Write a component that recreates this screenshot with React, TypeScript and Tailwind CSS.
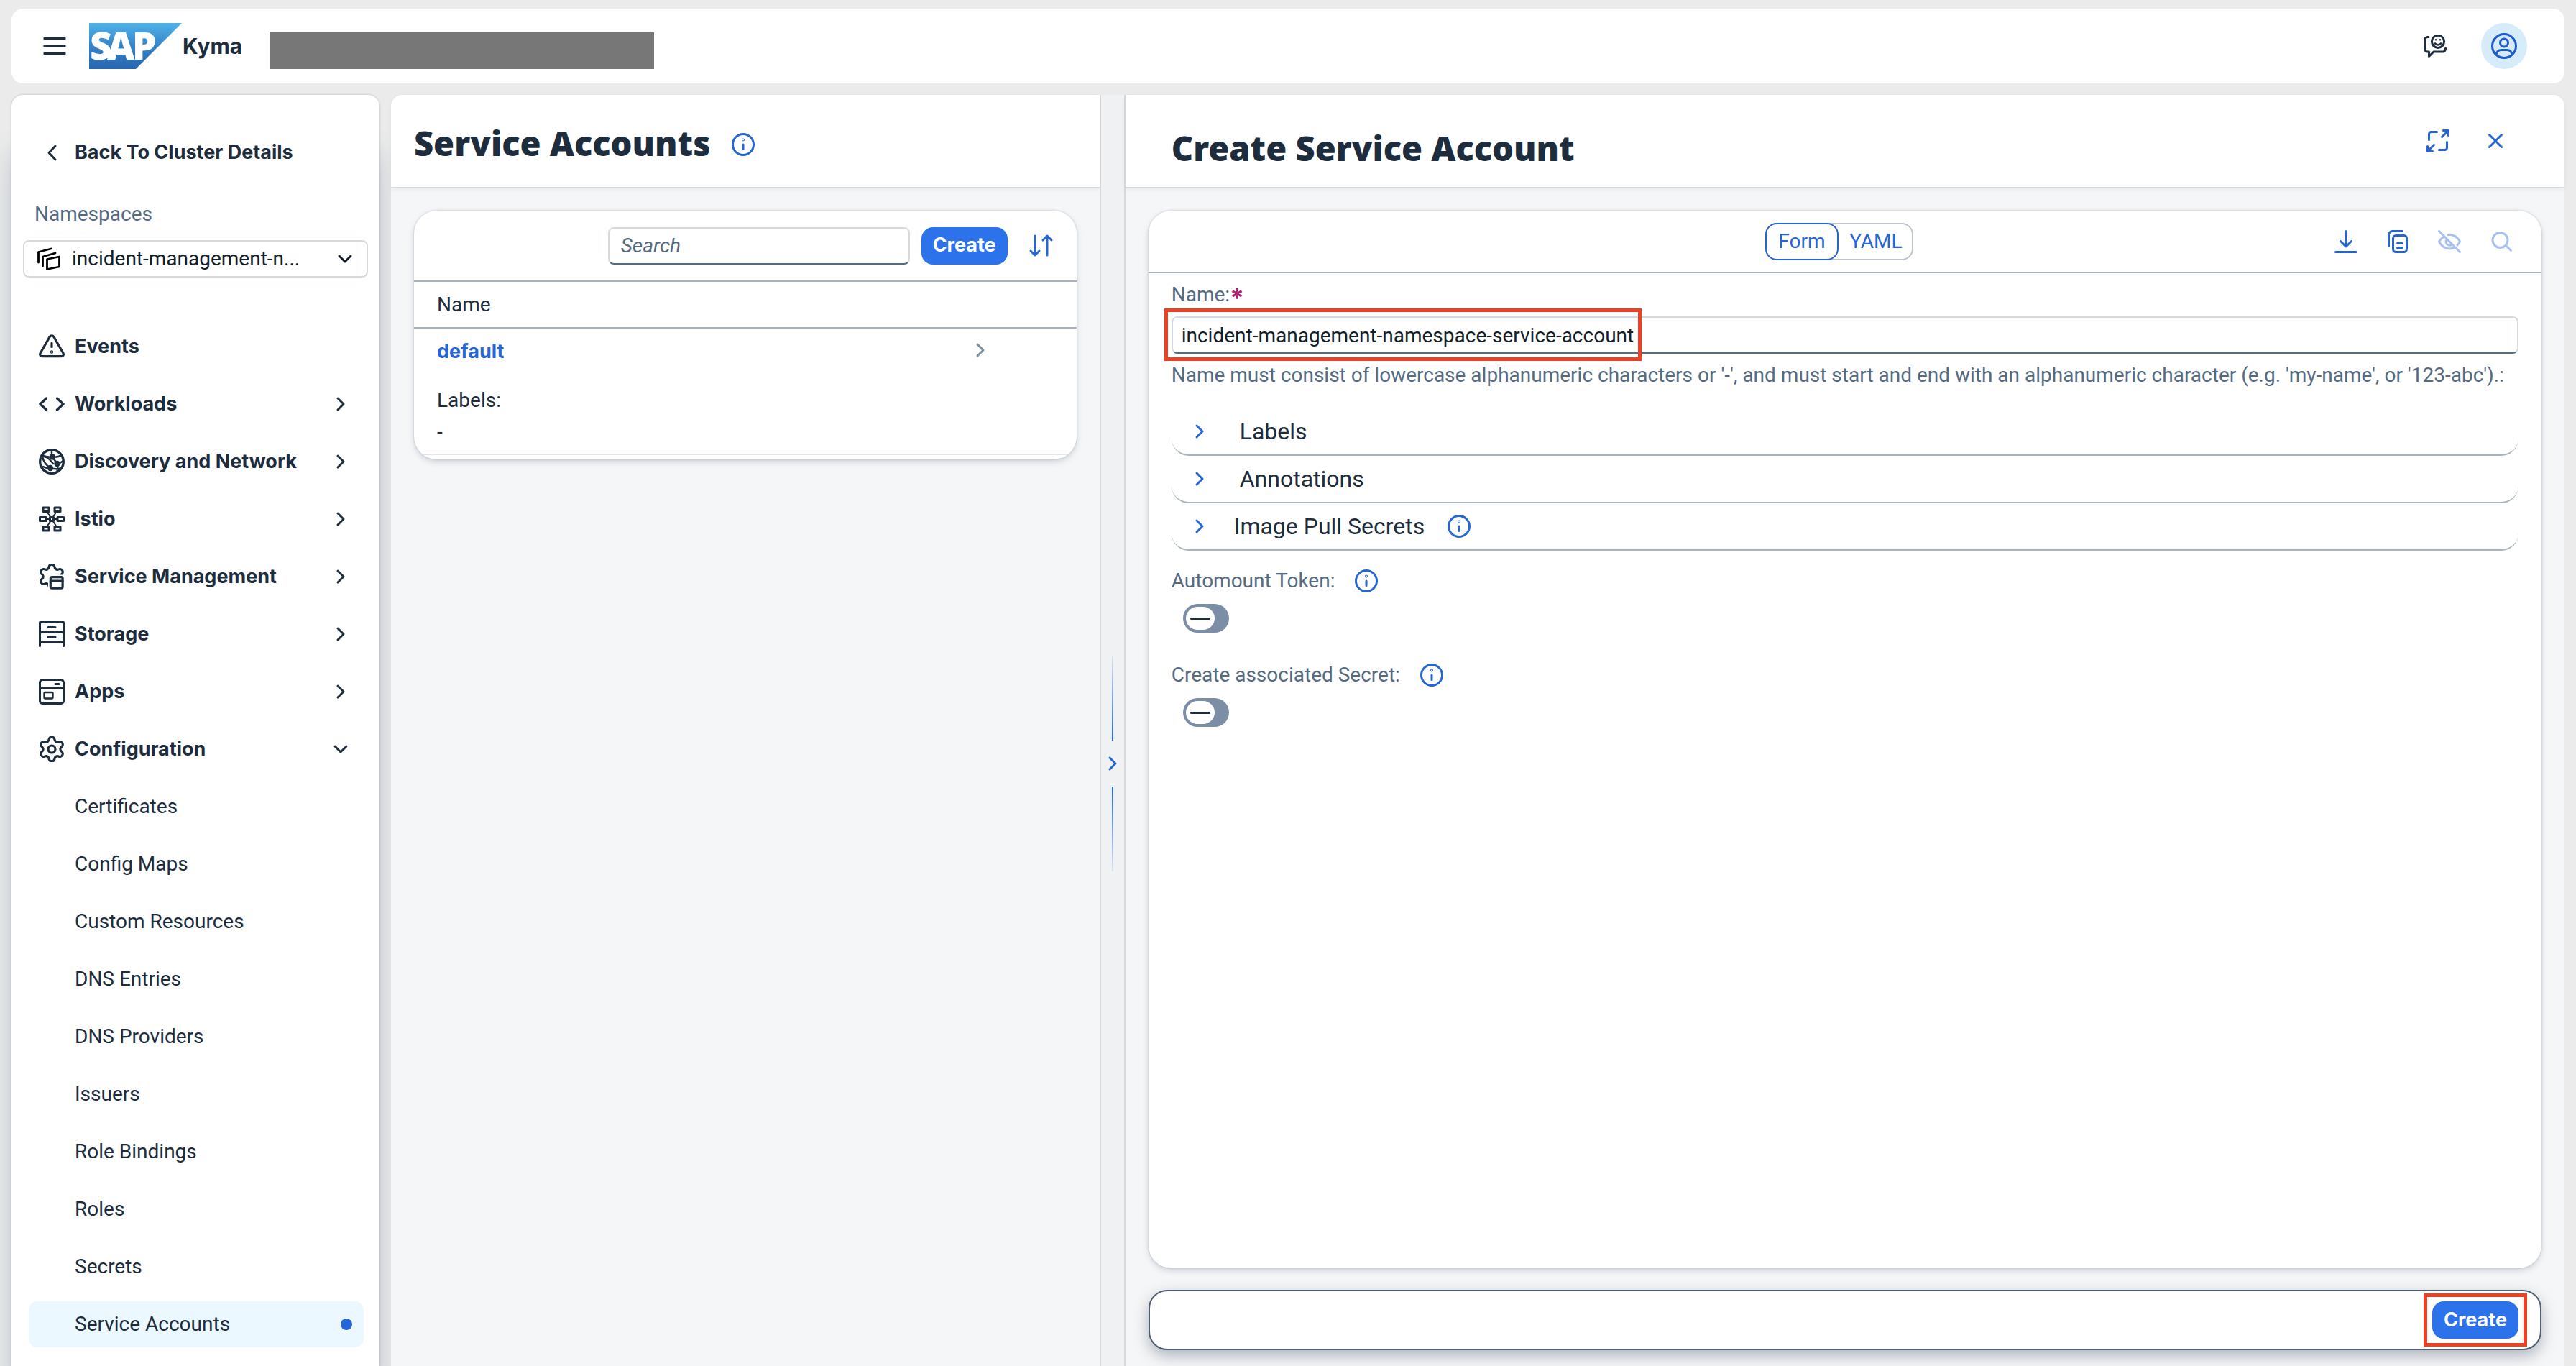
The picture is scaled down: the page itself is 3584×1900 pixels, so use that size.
import { useState, type ReactNode } from "react";

type IconProps = { w: number; h?: number; sw?: number; className?: string; children: ReactNode };

function Icon({ w, h = w, sw = 3, className = "", children }: IconProps) {
  return (
    <svg
      aria-hidden="true"
      width={w}
      height={h}
      viewBox={`0 0 ${w} ${h}`}
      fill="none"
      stroke="currentColor"
      strokeWidth={sw}
      strokeLinecap="round"
      strokeLinejoin="round"
      className={`shrink-0 ${className}`}
    >
      {children}
    </svg>
  );
}

const GEAR =
  "M9.671 4.136a2.34 2.34 0 0 1 4.659 0 2.34 2.34 0 0 0 3.319 1.915 2.34 2.34 0 0 1 2.33 4.033 2.34 2.34 0 0 0 0 3.831 2.34 2.34 0 0 1-2.33 4.033 2.34 2.34 0 0 0-3.319 1.915 2.34 2.34 0 0 1-4.659 0 2.34 2.34 0 0 0-3.32-1.915 2.34 2.34 0 0 1-2.33-4.033 2.34 2.34 0 0 0 0-3.831A2.34 2.34 0 0 1 6.35 6.051a2.34 2.34 0 0 0 3.319-1.915";

const ChevronRight = ({ className = "" }: { className?: string }) => (
  <Icon w={24} className={className}>
    <path d="M8 4l8 8-8 8" />
  </Icon>
);

const ChevronDown = ({ className = "" }: { className?: string }) => (
  <Icon w={24} className={className}>
    <path d="M4 8l8 8 8-8" />
  </Icon>
);

const InfoIcon = () => (
  <Icon w={32}>
    <circle cx="16" cy="16" r="14.5" />
    <path d="M16 16v6.5" />
    <circle cx="16" cy="9.5" r="0.5" />
  </Icon>
);

const navIcons: Record<string, ReactNode> = {
  Events: (
    <Icon w={36} sw={3.2}>
      <path d="M15.2 4.4a3.3 3.3 0 0 1 5.6 0L33.8 27c1.4 2.4.2 4.6-2.6 4.6H4.8c-2.8 0-4-2.2-2.6-4.6z" />
      <path d="M18 13v5.5" />
      <circle cx="18" cy="25.5" r="0.6" />
    </Icon>
  ),
  Workloads: (
    <Icon w={36} sw={3.4}>
      <path d="M10.5 10L2 18l8.500 8M25.500 10L34 18l-8.500 8" />
    </Icon>
  ),
  "Discovery and Network": (
    <Icon w={36} sw={2.4}>
      <circle cx="18" cy="18" r="16.300" strokeWidth="3.400" />
      <circle cx="19" cy="11.500" r="3" fill="currentColor" />
      <circle cx="25.500" cy="21" r="3" fill="currentColor" />
      <circle cx="16" cy="27" r="3" fill="currentColor" />
      <path d="M18 2v9M5 9c4 2.500 9 3 14 2.500M19 11.500c5 .5 9 0 12.500-2.500M19 11.500l6.500 9.500M25.500 21c3-.5 6-2 8.500-4M5 10c1 8 5 13 11 17M16 27c-4 .5-7 0-10-2M16 27c5 1.500 10 1.500 14 .5M25.500 21c1 3 1 6 0 9" />
      <path d="M7 11c5 .5 8 4 13 10" />
    </Icon>
  ),
  Istio: (
    <Icon w={36} sw={3}>
      <path strokeWidth="2" d="M11 7l14 22M25 7L11 29M8 18h20" />
      <g fill="#fff">
        <rect x="6" y="2" width="8" height="5.500" />
        <rect x="22" y="2" width="8" height="5.500" />
        <rect x="1.500" y="15.500" width="8.500" height="5" />
        <rect x="26" y="15.500" width="8.500" height="5" />
        <rect x="6" y="28.500" width="8" height="5.500" />
        <rect x="22" y="28.500" width="8" height="5.500" />
        <rect x="15.500" y="15.500" width="5" height="5" />
      </g>
    </Icon>
  ),
  "Service Management": (
    <Icon w={36} sw={3.2}>
      <path transform="translate(-2.400 -2.400) scale(1.700)" strokeWidth="1.900" d={GEAR} />
      <path d="M13 15.500h23V36H13z" fill="#fff" stroke="none" />
      <rect x="16.300" y="18.600" width="16.800" height="15.600" rx="2" />
      <path d="M16.500 24.200h16.500" />
    </Icon>
  ),
  Storage: (
    <Icon w={36} sw={3}>
      <path d="M1.500 34.500v-33h33v33M1.500 15.500h33M1.500 28.500h33M13 8.500h10M13 22h10" />
    </Icon>
  ),
  Apps: (
    <Icon w={36} sw={3}>
      <rect x="1.500" y="1.500" width="33" height="33" rx="4" />
      <path d="M1.500 12.500h33M23 7.500h5" />
      <rect x="7.500" y="19" width="12" height="8.500" rx="1.500" strokeWidth="2.400" />
    </Icon>
  ),
  Configuration: (
    <Icon w={36} sw={3.2}>
      <path transform="translate(-2.400 -2.400) scale(1.700)" strokeWidth="1.900" d={GEAR} />
      <circle cx="18" cy="18" r="5" />
    </Icon>
  ),
};

const configItems = [
  "Certificates",
  "Config Maps",
  "Custom Resources",
  "DNS Entries",
  "DNS Providers",
  "Issuers",
  "Role Bindings",
  "Roles",
  "Secrets",
  "Service Accounts",
];

function Logo() {
  return (
    <svg role="img" aria-label="SAP" width="130" height="64" viewBox="0 0 130 64" className="shrink-0 overflow-visible">
      <defs>
        <linearGradient id="sap" x1="0" y1="0" x2="0" y2="1">
          <stop offset="0" stopColor="#4fb2e8" />
          <stop offset="0.500" stopColor="#3583c8" />
          <stop offset="1" stopColor="#2866b0" />
        </linearGradient>
      </defs>
      <path d="M0 0h129L65 64H0z" fill="url(#sap)" />
      <text x="1 25 60" y="51" fill="#fff" fontFamily="Noto Sans, sans-serif" fontWeight="900" fontSize="53">
        SAP
      </text>
    </svg>
  );
}

function TopBar() {
  return (
    <header className="mx-4 mt-3 flex h-26 items-center rounded-2xl bg-white pr-[52px] pl-11">
      <button type="button" aria-label="Menu">
        <Icon w={32} sw={3.4} className="text-[#1d2d3e]">
          <path d="M2 5.500h28M2 16h28M2 26.500h28" />
        </Icon>
      </button>
      <a href="#home" className="ml-8 flex items-center" aria-label="Kyma home">
        <Logo />
        <span className="font-[Inter,sans-serif] text-[30px] font-bold">Kyma</span>
      </a>
      <div className="mb-5 ml-[38px] h-[51px] w-[535px] self-end bg-[#777777]" />
      <button type="button" aria-label="Feedback" className="ml-auto">
        <Icon w={32} sw={3}>
          <path d="M7 3.500H5.500a4 4 0 0 0-4 4V20a4 4 0 0 0 4 4h2v6.500l6.500-6.500h12.500a4 4 0 0 0 4-4v-.8" />
          <circle cx="20" cy="9.800" r="8.600" />
          <path d="M16 12.500c2 2.600 6 2.600 8 0" strokeWidth="2.800" />
          <path d="M17 7.200h.01M23 7.200h.01" strokeWidth="2.400" />
        </Icon>
      </button>
      <button
        type="button"
        aria-label="Profile"
        className="ml-12 flex size-16 items-center justify-center rounded-full bg-[#d6ecfb] text-[#1e5bcf]"
      >
        <Icon w={36} sw={3}>
          <circle cx="18" cy="18" r="16.500" />
          <circle cx="18" cy="13.500" r="5.500" />
          <path d="M7 29.500c1-4 4-6 7-6h8c3 0 6 2 7 6" />
        </Icon>
      </button>
    </header>
  );
}

function Sidebar() {
  return (
    <aside className="flex w-[512px] shrink-0 flex-col rounded-t-2xl bg-white pt-12 shadow-[0_80px_36px_rgba(85,107,130,0.3),0_0_3px_rgba(85,107,130,0.4)]">
      <a href="#cluster" className="flex h-16 items-center gap-3.5 pl-11 font-[Inter,sans-serif] text-[27px] font-bold">
        <Icon w={30}>
          <path d="M17 6l-9 9.500 9 9.500" />
        </Icon>
        Back To Cluster Details
      </a>
      <label htmlFor="namespace" className="mt-[34px] ml-8 text-[28px] leading-10 text-[#556b82]">
        Namespaces
      </label>
      <div className="mx-4 mt-4 flex h-13 items-center rounded-lg border-2 border-[#d5dadd] pr-4.5 pl-4.5 text-[#131e29]">
        <Icon w={32} sw={2.8} className="text-black">
          <path d="M1.500 21V6.500L19 2M7.500 26V13L25 8" />
          <path d="M13.500 16.500l17-3.500v14l-17 3.500z" />
        </Icon>
        <select id="namespace" className="ml-4 h-full min-w-0 flex-1 appearance-none bg-transparent text-[28px] outline-none">
          <option>incident-management-n...</option>
        </select>
        <ChevronDown className="pointer-events-none" />
      </div>
      <nav className="mt-16 mr-[22px] ml-6 flex flex-col gap-4 pb-4" aria-label="Namespace resources">
        {Object.entries(navIcons).map(([name, icon]) => (
          <button
            key={name}
            type="button"
            className="flex h-16 items-center gap-3.5 pr-5 pl-3.5 text-left font-[Inter,sans-serif] text-[27px] font-bold"
          >
            {icon}
            <span className="flex-1">{name}</span>
            {name === "Configuration" ? <ChevronDown /> : name !== "Events" && <ChevronRight />}
          </button>
        ))}
        {configItems.map((name) => {
          const active = name === "Service Accounts";
          return (
            <a
              key={name}
              href={`#${name}`}
              aria-current={active ? "page" : undefined}
              className={`flex h-16 items-center justify-between rounded-xl pr-4 pl-16 text-[28px] ${active ? "bg-[#ebf8ff]" : ""}`}
            >
              {name}
              {active && <span className="size-4 rounded-full bg-[#2566d4]" />}
            </a>
          );
        })}
      </nav>
    </aside>
  );
}

const cardShadow = "shadow-[0_4px_8px_rgba(85,107,130,0.22),0_0_3px_rgba(85,107,130,0.3)]";

function AccountList() {
  return (
    <section className="flex min-w-0 flex-[987] flex-col rounded-tl-2xl border-r-2 border-[#d9d9d9] bg-[#f5f6f7]">
      <header className="flex h-[130px] items-center gap-[30px] rounded-tl-2xl border-b-2 border-[#d9d9d9] bg-white px-8 pt-1.5 shadow-[0_2px_6px_rgba(0,0,0,0.05)]">
        <h1 className="font-[Noto_Sans,sans-serif] text-[47px] leading-16 font-black">Service Accounts</h1>
        <button type="button" aria-label="About service accounts" className="pt-1 text-[#2566d4]">
          <InfoIcon />
        </button>
      </header>
      <div className="px-8 pt-[31px]">
        <div className={`overflow-hidden rounded-[32px] bg-white pb-1.5 ${cardShadow}`}>
          <div className="flex h-[99px] items-center justify-end border-b-2 border-[#a8b3bd] pr-[26px]">
            <input
              type="search"
              aria-label="Search"
              placeholder="Search"
              className="h-13 w-[420px] rounded-lg border-2 border-[#d5dadd] border-b-[#556b82] px-4 text-[28px] outline-none placeholder:text-[#556b82] placeholder:italic"
            />
            <button
              type="button"
              className="ml-4 h-13 rounded-2xl bg-[#2c72eb] px-4 font-[Inter,sans-serif] text-[27px] font-bold text-white"
            >
              Create
            </button>
            <button type="button" aria-label="Sort" className="ml-[22px] flex h-13 w-12 items-center justify-center text-[#2566d4]">
              <Icon w={36}>
                <path d="M10 4v27M4 25l6 6 6-6M27 31V4M21 10l6-6 6 6" />
              </Icon>
            </button>
          </div>
          <table className="w-full text-left text-[28px]">
            <thead>
              <tr className="h-16 border-b-2 border-[#a8b3bd]">
                <th className="pl-8 font-normal" colSpan={2}>
                  Name
                </th>
              </tr>
            </thead>
            <tbody>
              <tr>
                <td className="pt-3 pl-8 leading-10">
                  <a href="#default" className="font-[Inter,sans-serif] text-[27px] font-bold text-[#2566d4]">
                    default
                  </a>
                </td>
                <td className="w-[146px] pt-2">
                  <ChevronRight className="text-[#7b8fa5]" />
                </td>
              </tr>
              <tr className="border-b-2 border-[#e5e5e5]">
                <td colSpan={2} className="pt-[26px] pb-2 pl-8 leading-11">
                  <p>Labels:</p>
                  <p>-</p>
                </td>
              </tr>
            </tbody>
          </table>
        </div>
      </div>
    </section>
  );
}

function Splitter() {
  return (
    <div className="flex w-8 shrink-0 flex-col items-center justify-center bg-[#eff1f2] pt-[92px] text-[#2566d4]">
      <div className="h-[118px] w-0.5 bg-linear-to-b from-[#2566d4]/10 to-[#2566d4]" />
      <button type="button" aria-label="Expand column" className="flex h-16 items-center">
        <ChevronRight />
      </button>
      <div className="h-[118px] w-0.5 bg-linear-to-b from-[#2566d4] to-[#2566d4]/10" />
    </div>
  );
}

function Expander({ title, info = false }: { title: string; info?: boolean }) {
  return (
    <div className="flex h-[66px] items-center rounded-b-3xl border-b-2 border-[#a8b3bd] pl-[27px]">
      <button type="button" aria-expanded="false" className={`flex items-center text-[32px] ${info ? "gap-9" : "gap-11"}`}>
        <ChevronRight className="text-[#2566d4]" />
        {title}
      </button>
      {info && (
        <button type="button" aria-label={`About ${title}`} className="ml-8 text-[#2566d4]">
          <InfoIcon />
        </button>
      )}
    </div>
  );
}

function Toggle({ id, label }: { id: string; label: string }) {
  return (
    <div>
      <div className="flex h-10 items-center gap-7">
        <label htmlFor={id} className="text-[28px] leading-10 text-[#556b82]">
          {label}
        </label>
        <button type="button" aria-label={`About ${label}`} className="text-[#2566d4]">
          <InfoIcon />
        </button>
      </div>
      <input
        id={id}
        type="checkbox"
        role="switch"
        className="relative mt-3 ml-4 block h-10 w-16 appearance-none rounded-[20px] bg-[#7c8ea6] before:absolute before:top-1 before:left-1 before:h-8 before:w-10 before:rounded-2xl before:bg-white after:absolute after:top-[19px] after:left-2.5 after:h-[3px] after:w-7 after:rounded-full after:bg-[#1d2d3e]"
      />
    </div>
  );
}

const toolButton = "flex h-13 w-14 items-center justify-center text-[#2566d4] disabled:text-[#a7c1f0]";

function CreatePanel() {
  const [name, setName] = useState("incident-management-namespace-service-account");
  return (
    <section className="mr-4 flex min-w-0 flex-[2005] flex-col rounded-tr-2xl border-l-2 border-[#d9d9d9] bg-[#f5f6f7]">
      <header className="flex h-[130px] items-center justify-between rounded-tr-2xl border-b-2 border-[#d9d9d9] bg-white pr-20 pl-16 shadow-[0_2px_6px_rgba(0,0,0,0.05)]">
        <h2 className="pt-5 font-[Noto_Sans,sans-serif] text-[47px] leading-16 font-black">Create Service Account</h2>
        <div className="flex items-center gap-12 text-[#2566d4]">
          <button type="button" aria-label="Full screen">
            <Icon w={32}>
              <path d="M3.500 14.500v-8a3 3 0 0 1 3-3h8M28.500 17.500v8a3 3 0 0 1-3 3h-8" />
              <path d="M23.500 1.500h7v7M30.500 1.500l-9 9M8.500 30.500h-7v-7M1.500 30.500l9-9" />
            </Icon>
          </button>
          <button type="button" aria-label="Close">
            <Icon w={32}>
              <path d="M7.500 7.500l17 17M24.500 7.500l-17 17" />
            </Icon>
          </button>
        </div>
      </header>
      <form className="flex flex-1 flex-col px-8 pt-[31px] pb-[22px]" onSubmit={(e) => e.preventDefault()}>
        <div className={`flex-1 rounded-[32px] bg-white ${cardShadow}`}>
          <div className="grid h-[87px] grid-cols-[1fr_auto_1fr] items-center border-b-2 border-[#a8b3bd] pr-7 pl-3">
            <div />
            <div className="flex h-13 w-[206px] items-stretch rounded-2xl text-[28px] text-[#2566d4] shadow-[inset_0_0_0_2px_#bcc3ca]">
              <button type="button" aria-pressed="true" className="w-[102px] rounded-2xl border-2 border-[#2566d4] bg-white">
                Form
              </button>
              <button type="button" aria-pressed="false" className="flex-1">
                YAML
              </button>
            </div>
            <div className="flex justify-end gap-4">
              <button type="button" aria-label="Download" className={toolButton}>
                <Icon w={32}>
                  <path d="M16 1.500v21M8.500 15.500l7.500 7.500 7.500-7.500M1.500 30.500h29" />
                </Icon>
              </button>
              <button type="button" aria-label="Copy" className={toolButton}>
                <Icon w={32}>
                  <path d="M3.500 22.500v-16a5 5 0 0 1 5-5h14" />
                  <rect x="9.500" y="7.500" width="19" height="23" rx="4" />
                  <path d="M15.500 18.500h7M15.500 24.500h7" />
                </Icon>
              </button>
              <button type="button" aria-label="Hide read-only fields" disabled className={toolButton}>
                <Icon w={32}>
                  <path d="M1.500 1.500l29 29M14 6.700c7-.8 13 2.800 16.500 9.300-.8 1.800-2 3.400-3.500 4.800M7.500 9.800C5 11.300 3 13.400 1.500 16c4.500 8.800 13.500 12.200 21.500 8.200" />
                  <path d="M12.200 13a5 5 0 0 0 6.800 7.200" />
                </Icon>
              </button>
              <button type="button" aria-label="Find" disabled className={toolButton}>
                <Icon w={32}>
                  <circle cx="14.500" cy="14" r="10.500" />
                  <path d="M22.500 21.500l7 7" />
                </Icon>
              </button>
            </div>
          </div>
          <div className="px-8 pt-2.5">
            <label htmlFor="name" className="flex h-10 items-center text-[28px] text-[#556b82]">
              Name:
              <span className="pt-2 font-[Inter,sans-serif] text-[36px] leading-10 font-bold text-[#aa2270]">*</span>
            </label>
            <div className="relative mt-2.5">
              <input
                id="name"
                type="text"
                required
                value={name}
                onChange={(e) => setName(e.target.value)}
                className="block h-13 w-full rounded-lg border-2 border-[#d5dadd] border-b-[#556b82] px-3 text-[28px] text-[#131e29] outline-none"
              />
              <div className="pointer-events-none absolute -top-[11px] -left-[10px] h-[73px] w-[664px] border-[5px] border-[#ec4125]" />
            </div>
            <p className="mt-2.5 text-[28px] leading-10 text-[#556b82]">
              Name must consist of lowercase alphanumeric characters or '-', and must start and end with an alphanumeric
              character (e.g. 'my-name', or '123-abc').:
            </p>
            <div className="mt-[26px]">
              <Expander title="Labels" />
              <Expander title="Annotations" />
              <Expander title="Image Pull Secrets" info />
            </div>
            <div className="mt-[22px] flex flex-col gap-[39px] pb-8">
              <Toggle id="automount" label="Automount Token:" />
              <Toggle id="secret" label="Create associated Secret:" />
            </div>
          </div>
        </div>
        <div className="mt-[30px] flex h-21 items-center justify-end rounded-[26px] border-2 border-[#4f5f70] bg-white pr-[30px] shadow-[0_8px_20px_rgba(70,85,105,0.4)]">
          <div className="relative">
            <button
              type="submit"
              className="block h-13 rounded-2xl bg-[#2c72eb] px-4 font-[Inter,sans-serif] text-[27px] font-bold text-white"
            >
              Create
            </button>
            <div className="pointer-events-none absolute -inset-x-3 -inset-y-[11px] border-[5px] border-[#ec4125]" />
          </div>
        </div>
      </form>
    </section>
  );
}

export default function App() {
  return (
    <div className="flex min-h-screen flex-col overflow-hidden bg-[#ebebeb] font-[Roboto,sans-serif] text-[#1d2d3e]">
      <TopBar />
      <main className="mt-4 ml-4 flex flex-1">
        <Sidebar />
        <div className="ml-4 flex min-w-0 flex-1">
          <AccountList />
          <Splitter />
          <CreatePanel />
        </div>
      </main>
    </div>
  );
}
